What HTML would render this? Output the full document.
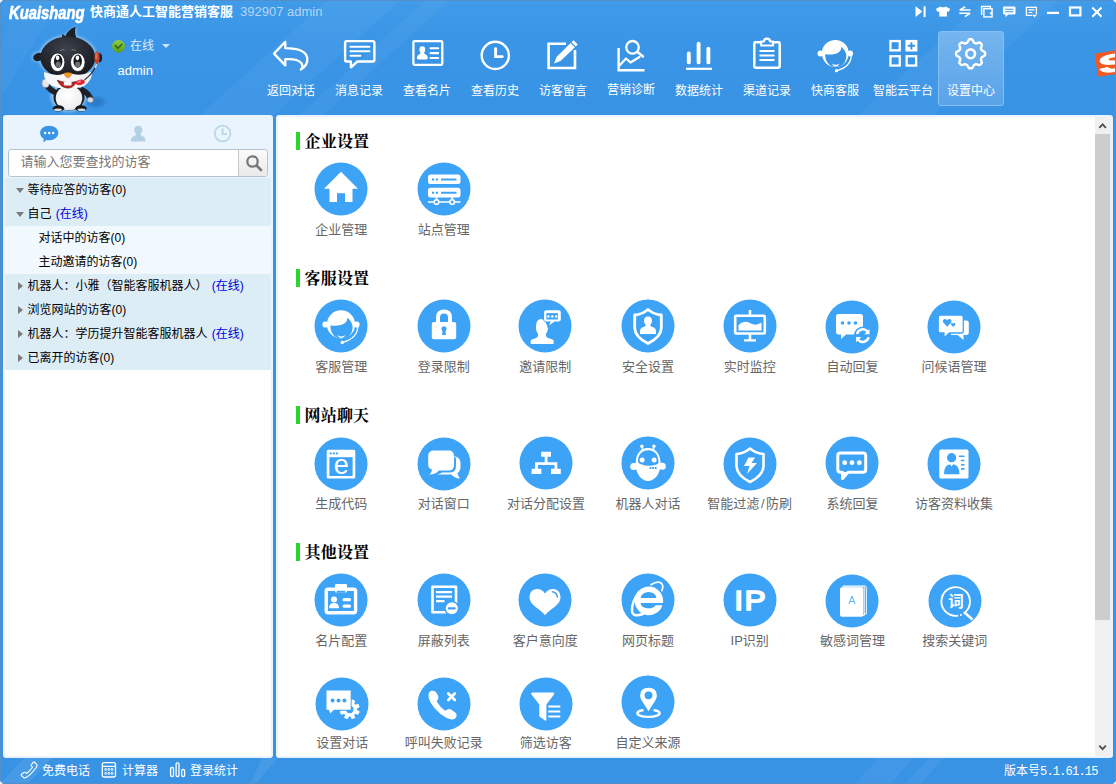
<!DOCTYPE html>
<html lang="zh-CN">
<head>
<meta charset="utf-8">
<title>快商通人工智能营销客服</title>
<style>
*{box-sizing:border-box;margin:0;padding:0}
html,body{width:1116px;height:784px;overflow:hidden}
body{position:relative;background:linear-gradient(#409be9 0,#3a95e6 40px,#3893e5 115px,#3893e5 100%);font-family:"Liberation Sans","Noto Sans CJK SC",sans-serif;font-size:12px;color:#000}
.abs{position:absolute}
#frame{position:absolute;left:0;top:0;width:1116px;height:784px;border:1px solid #5390c9;pointer-events:none;z-index:50}
.stripe{position:absolute;left:0;top:0;width:1116px;height:784px;z-index:0}
/* title */
#logo{position:absolute;left:8.500px;top:2.750px;font-family:"Liberation Sans",sans-serif;font-style:italic;font-weight:bold;font-size:18px;letter-spacing:0;color:#fff;line-height:20px;transform-origin:0 50%;transform:scaleX(0.820);white-space:nowrap;-webkit-text-stroke:0.700px #fff}
#ttl{position:absolute;left:90px;top:2px;font-weight:bold;font-size:13px;color:#fff;line-height:20px;white-space:nowrap}
#acct{position:absolute;left:240px;top:2px;font-size:13px;color:#b5d6f5;line-height:20px;white-space:nowrap}
#stat{position:absolute;left:130px;top:37px;font-size:12px;color:#d9ecfc;line-height:18px}
#uname{position:absolute;left:117.500px;top:62px;font-size:13px;color:#fff;line-height:18px}
/* toolbar */
.tb{position:absolute;top:31px;width:68px;height:74px;text-align:center;color:#fff;font-size:12px}
.tb span{position:absolute;left:0;right:0;top:50px;line-height:18px;white-space:nowrap}
.tb svg{position:absolute;left:14px;top:3px;width:40px;height:40px}
.tb.sel{background:linear-gradient(#75b5ef,#5aa3e8);border:1px solid #86c0f2;border-radius:3px;width:66px;left:938px;top:31px;height:75px}
.tbl{position:absolute;width:80px;text-align:center;color:#fff;font-size:12px;line-height:20px;white-space:nowrap}
/* left panel */
#lp{position:absolute;left:3px;top:115px;width:270px;height:643px;background:#fff;border-radius:3px;overflow:hidden;border:2px solid #eaf3fd}
#lp .tabs{position:absolute;left:0;top:0;width:266px;height:62px;background:#eaf4ff}
#srch{position:absolute;left:3px;top:31.500px;width:259.500px;height:28px;border:1px solid #b9c3cc;border-radius:3px;background:#fff}
#srch .ph{position:absolute;left:11.500px;top:3.500px;font-size:13px;color:#777;line-height:18px;white-space:nowrap}
#srch .btn{position:absolute;right:0;top:0;width:29px;height:26px;border-left:1px solid #c5c9cd;background:linear-gradient(#fbfbfb,#e9e9e9);border-radius:0 3px 3px 0}
.row{position:absolute;left:0;width:266px;height:24px;background:#ddedf6;font-size:12px;line-height:25px;color:#000;white-space:nowrap}
.row.sub{background:#f1f9fe}
.row b{font-weight:normal;color:#0000e0;margin-left:1px}
.row i{position:absolute;left:10.500px;top:10px;width:0;height:0;border-style:solid}
.row i.dn{border-width:5px 4px 0 4px;border-color:#7a7a7a transparent transparent transparent}
.row i.rt{left:12.500px;top:7.500px;border-width:4px 0 4px 5px;border-color:transparent transparent transparent #7a7a7a}
.row em{font-style:normal;position:absolute;left:22.500px;top:0}
.row.sub em{left:33.500px}
/* right panel */
#rp{position:absolute;left:276px;top:115px;width:837px;height:643px;background:#fff;border-radius:3px;overflow:hidden;border:2px solid #eaf3fd}
.sec{position:absolute;left:18px;height:18px;border-left:4px solid #2bd52b;padding-left:4.500px;font-family:"Liberation Serif","Noto Serif CJK SC",serif;font-weight:bold;font-size:16px;line-height:20px;letter-spacing:0.200px;color:#000;white-space:nowrap}
.ic{position:absolute;width:102px;height:84px;text-align:center}
.ic svg{position:absolute;left:24px;top:0;width:54px;height:54px}
.ic span{position:absolute;left:-10px;right:-10px;top:58px;font-size:13px;line-height:18px;color:#666;white-space:nowrap}
.ic span i{font-style:normal;padding:0 1.500px}
#sb{position:absolute;right:0;top:0;width:16px;height:639px;background:#f0f0f0}
#sb .th{position:absolute;left:0;top:17px;width:15px;height:486px;background:#cdcdcd}
/* status bar */
.st{position:absolute;top:762px;font-size:12px;line-height:18px;color:#fff;white-space:nowrap}
</style>
</head>
<body>
<svg class="stripe" viewBox="0 0 1116 784" preserveAspectRatio="none">
<polygon points="199,116 273,116 401,0 327,0" fill="#fff" opacity="0.045"/>
<polygon points="298,116 322,116 450,0 426,0" fill="#fff" opacity="0.040"/>
<polygon points="-10,60 7,28 24,0 60,0 -10,116" fill="#fff" opacity="0.035"/>
<polygon points="857,116 932,116 1060,0 985,0" fill="#fff" opacity="0.040"/>
<polygon points="0,784 28,784 52,758 24,758" fill="#fff" opacity="0.070"/>
<polygon points="250,784 256,784 278,758 262,758" fill="#fff" opacity="0.070"/>
<polygon points="855,784 890,784 914,758 879,758" fill="#fff" opacity="0.050"/>
<polygon points="905,784 920,784 944,758 929,758" fill="#fff" opacity="0.050"/>
</svg>

<!-- title bar -->
<div id="logo">Kuaishang</div>
<div id="ttl">快商通人工智能营销客服</div>
<div id="acct">392907 admin</div>

<!-- window controls -->
<svg class="abs" id="wc" style="left:910px;top:2px;width:200px;height:22px" viewBox="910 2 200 22" fill="none" stroke="#fff" stroke-width="1.600">
<path d="M915.500 6.300 L922.400 11.600 L915.500 17 Z" fill="#fff" stroke="none"/><path d="M924.600 6.300 V17" stroke-width="2"/>
<path d="M935.800 9 L940.500 6.400 Q943 8.300 945.600 6.400 L950.300 9 L948.500 12.100 L946.900 11.200 V16.500 H939.300 V11.200 L937.700 12.100 Z" fill="#fff" stroke="none"/>
<path d="M959.600 10 H970.600 M965.200 6.800 L959.900 10 M959.300 13.300 H970.300 M964.800 16.600 L970 13.400" stroke-width="1.600"/>
<path d="M981.600 15 V6.500 H990.400 V8.600" stroke-width="1.400"/><rect x="983.900" y="8.700" width="8.200" height="8.200" stroke-width="1.400"/><path d="M992 11.300 L989.300 13.200 L992 15.100Z" fill="#fff" stroke="none"/>
<path d="M1004.300 6.400 H1014.200 Q1015.500 6.400 1015.500 7.700 V13.200 Q1015.500 14.500 1014.200 14.500 H1008.200 L1005.500 17.200 V14.500 H1004.300 Q1003 14.500 1003 13.200 V7.700 Q1003 6.400 1004.300 6.400 Z" fill="#fff" stroke="none"/><path d="M1005.200 9.200 H1013.300 M1005.200 11.800 H1013.300" stroke="#3a94e5" stroke-width="1.100"/>
<rect x="1026.400" y="7.300" width="10" height="8" stroke-width="1.300"/><path d="M1028.400 9.900 H1034.400 M1028.400 12.500 H1032.400" stroke-width="1.100"/><path d="M1031.800 14.600 H1037.400 L1034.600 17.700Z" fill="#fff" stroke="#3a94e5" stroke-width="0.600"/>
<path d="M1047 12.900 H1059" stroke-width="2.300"/>
<rect x="1070" y="7.500" width="10.400" height="7.900" stroke-width="2.200"/>
<path d="M1092.300 7.500 L1101.500 16.700 M1101.500 7.500 L1092.300 16.700" stroke-width="2.100"/>
</svg>

<!-- mascot -->
<svg class="abs" id="mascot" style="left:28px;top:22px;width:84px;height:94px" viewBox="28 22 84 94">
<defs>
<radialGradient id="hd" cx="0.45" cy="0.3" r="0.75"><stop offset="0" stop-color="#3d424d"/><stop offset="0.6" stop-color="#23262d"/><stop offset="1" stop-color="#14161a"/></radialGradient>
<radialGradient id="bl" cx="0.45" cy="0.4" r="0.7"><stop offset="0" stop-color="#ffffff"/><stop offset="0.75" stop-color="#f0f0f2"/><stop offset="1" stop-color="#b9bcc4"/></radialGradient>
<filter id="gl" x="-20%" y="-20%" width="140%" height="140%"><feGaussianBlur stdDeviation="1.600"/></filter>
</defs>
<ellipse cx="96" cy="102" rx="9" ry="5" fill="#1e5ea6" opacity="0.45" filter="url(#gl)"/>
<g filter="url(#gl)" opacity="0.550" fill="#cfe6fb">
<ellipse cx="67.800" cy="57" rx="29" ry="22"/><ellipse cx="68.500" cy="96" rx="18" ry="16"/><ellipse cx="38" cy="57" rx="6" ry="5"/><path d="M61 38 L75.500 26 L77 38Z"/>
</g>
<!-- tuft -->
<path d="M62 38 Q62 35 62.700 33.800 Q63.500 35.500 65.500 36 Q68 29.500 75.700 26.800 Q74 32 76.500 38 Z" fill="#1d2026"/>
<!-- ear -->
<ellipse cx="38.300" cy="57" rx="5.300" ry="4" fill="#1d2026" transform="rotate(-20 38.300 57)"/>
<!-- arms -->
<path d="M56 93 Q50 90 46.500 85.500" stroke="#1d2026" stroke-width="5.500" stroke-linecap="round" fill="none"/>
<path d="M82.500 90 Q88 93 90.500 98.500" stroke="#1d2026" stroke-width="5.500" stroke-linecap="round" fill="none"/>
<ellipse cx="45.600" cy="83.300" rx="3.600" ry="4.300" fill="#e4e6ea" stroke="#8c919c" stroke-width="0.600"/>
<ellipse cx="90.300" cy="99.800" rx="3" ry="2.600" fill="#d8dade" stroke="#8c919c" stroke-width="0.500"/>
<!-- body -->
<ellipse cx="69" cy="97.500" rx="15.500" ry="13" fill="#1d2026"/>
<ellipse cx="69" cy="98" rx="13.300" ry="12.300" fill="url(#bl)"/>
<!-- feet -->
<ellipse cx="58.500" cy="108.300" rx="5.600" ry="3" fill="#15171b"/><ellipse cx="81" cy="108.300" rx="5.600" ry="3" fill="#15171b"/>
<ellipse cx="58" cy="109.800" rx="4" ry="1.300" fill="#d9dbe0"/><ellipse cx="81.500" cy="109.800" rx="4" ry="1.300" fill="#d9dbe0"/>
<!-- head -->
<ellipse cx="67.800" cy="57.500" rx="27.500" ry="21" fill="url(#hd)"/>
<path d="M44 72 Q55 76.500 63 74 Q68 72.500 73 74 Q82 76.500 91.500 71.500 Q93 80 84 86 Q68 92 52 86 Q43 80 44 72Z" fill="#f6f6f8"/>
<!-- eyes -->
<ellipse cx="57.600" cy="62.300" rx="7.300" ry="9.300" fill="#fff" stroke="#15171b" stroke-width="0.800"/><ellipse cx="77.800" cy="62.300" rx="7.300" ry="9.300" fill="#fff" stroke="#15171b" stroke-width="0.800"/>
<ellipse cx="58.200" cy="61.300" rx="4.200" ry="6.600" fill="#17191d"/><ellipse cx="77.700" cy="61.200" rx="4.200" ry="6.600" fill="#17191d"/>
<ellipse cx="58.200" cy="64.500" rx="2.600" ry="3" fill="#6b6f78"/><ellipse cx="77.700" cy="64.500" rx="2.600" ry="3" fill="#6b6f78"/>
<ellipse cx="57.600" cy="57.800" rx="1.800" ry="2.400" fill="#fff"/><ellipse cx="77.400" cy="57.800" rx="1.800" ry="2.400" fill="#fff"/>
<path d="M60 50.500 Q62.500 49 64.500 50 M71.500 50 Q74 49 76 50.500" stroke="#8a8f9a" stroke-width="0.700" fill="none"/>
<!-- nose/mouth -->
<path d="M63.700 73.300 Q67.800 71.800 72.300 73.300 Q70 77.800 67.900 78 Q65.800 77.800 63.700 73.300Z" fill="#f29a2a" stroke="#b5651d" stroke-width="0.400"/>
<path d="M57.300 80.300 Q66 84 76.500 81.600 Q73.500 88.500 67.300 88 Q60.500 87.500 57.300 80.300Z" fill="#c2201f" stroke="#5a1511" stroke-width="0.700"/>
<rect x="63.800" y="81.500" width="7.800" height="4" rx="1.200" fill="#f3f6fa"/>
<!-- headset -->
<ellipse cx="99.500" cy="57.700" rx="2.600" ry="4.500" fill="#1d2026"/>
<ellipse cx="97" cy="57.600" rx="2.600" ry="6.300" fill="#c5402c"/>
<ellipse cx="96.400" cy="56" rx="1.100" ry="3.500" fill="#e0705a"/>
<path d="M96.500 64 Q94.500 72 84.500 80" stroke="#2a2d34" stroke-width="1.100" fill="none"/>
<path d="M96.500 64 L95.300 68" stroke="#e8e8ea" stroke-width="1.300" fill="none"/>
<ellipse cx="80.300" cy="82.300" rx="4.600" ry="2.700" fill="#e2283a" transform="rotate(-12 80.300 82.300)"/>
<ellipse cx="79.300" cy="81.600" rx="2" ry="1" fill="#f47a86" transform="rotate(-12 79.300 81.600)"/>
</svg>

<!-- status -->
<svg class="abs" style="left:111px;top:39px;width:15px;height:15px" viewBox="111 39 15 15"><defs><linearGradient id="gk" x1="0" y1="0" x2="0" y2="1"><stop offset="0" stop-color="#93cf45"/><stop offset="1" stop-color="#569c1c"/></linearGradient></defs><circle cx="118.500" cy="46.300" r="6.400" fill="url(#gk)"/><path d="M115.300 45.600 L118 48.300 L121.800 44.300" stroke="#2b6a0c" stroke-width="1.500" fill="none" stroke-linecap="round" stroke-linejoin="round"/></svg>
<div id="stat">在线</div>
<div class="abs" style="left:162px;top:44px;width:0;height:0;border-style:solid;border-width:4px 4px 0 4px;border-color:#cfe5fa transparent transparent transparent"></div>
<div id="uname">admin</div>

<!-- TOOLBAR -->
<div class="tb sel"></div>
<svg class="abs" style="left:260px;top:30px;width:760px;height:50px" viewBox="260 30 760 50" fill="none" stroke="#fff" stroke-width="2.6" stroke-linejoin="round" stroke-linecap="round">
<!-- 1 reply arrow -->
<path d="M285.300 41.800 L274 53.600 L285.300 65.400 V59.200 Q297.500 58.500 301.300 63 Q303.800 66.500 300.800 69.600 Q308 65.500 307.300 58 Q305.500 48.400 285.300 48.200 Z" stroke-width="2.300"/>
<!-- 2 message -->
<g transform="translate(0.4 0.8)"><path d="M346 40.300 H372.500 Q374 40.300 374 42 V59 Q374 60.700 372.500 60.700 H357 L350.500 66.500 V60.700 H346 Q344.700 60.700 344.700 59 V42 Q344.700 40.300 346 40.300 Z" stroke-width="2.400"/>
<path d="M350 46 H369 M350 50.500 H369 M350 55 H360" stroke-width="2"/></g>
<!-- 3 card -->
<rect x="413.400" y="41.200" width="28.900" height="23.600" rx="1.200" stroke-width="2.300"/>
<path d="M430.500 48.200 H438.200 M430.500 53.100 H438.200 M430.500 58 H438.200" stroke-width="2.100"/>
<path d="M422.300 46.300 q2.900 0 2.900 3.300 q0 2.300 -1.200 3.200 q0.200 1.200 1.600 1.700 q2.200 0.800 2.200 3.400 q0 1.600 -2.500 1.600 h-6 q-2.500 0 -2.500 -1.600 q0 -2.600 2.200 -3.400 q1.400 -0.500 1.600 -1.700 q-1.200 -0.900 -1.200 -3.200 q0 -3.300 2.900 -3.300z" fill="#fff" stroke="none"/>
<!-- 4 clock -->
<circle cx="495.300" cy="55.400" r="13.600" stroke-width="2.400"/>
<path d="M495.600 48.600 V56.600 H502.300" stroke-width="2.900" stroke-linejoin="miter" stroke-linecap="round"/>
<!-- 5 edit -->
<path d="M566 43.700 H548.600 V68 H575 V50" stroke-width="2.600" stroke-linejoin="miter" stroke-linecap="butt"/>
<path d="M573.500 40.200 L577.800 44.500 L560.500 61 L554 63.500 L556.500 57 Z" fill="#fff" stroke="none"/>
<path d="M571 42.600 L575.400 47" stroke="#3a94e5" stroke-width="1.200"/>
<!-- 6 chart magnifier -->
<path d="M618.600 48 V70.200 H644.500" stroke-width="2.400" stroke-linejoin="miter" stroke-linecap="butt"/>
<path d="M619.500 65.500 L626 58.500 L630.500 62.500 L639.500 57" stroke-width="2.200"/>
<circle cx="632.500" cy="47.300" r="6.300" stroke-width="2.300"/>
<path d="M637.500 52 L643 56.500" stroke-width="2.400"/>
<!-- 7 bars -->
<path d="M688.800 53.400 V62.400 M698.600 43.800 V62.400 M708.400 48.800 V62.400" stroke-width="3.900"/>
<path d="M686 68.800 H712" stroke-width="2.200" stroke-linecap="butt"/>
<!-- 8 clipboard -->
<path d="M760 42.300 H755.500 Q754.300 42.300 754.300 43.500 V66.500 Q754.300 67.700 755.500 67.700 H778.500 Q779.700 67.700 779.700 66.500 V43.500 Q779.700 42.300 778.500 42.300 H774" stroke-width="2.500"/>
<path d="M761 45.500 V41.500 H764 Q764 38.600 767 38.600 Q770 38.600 770 41.500 H773 V45.500 Z" stroke-width="2.200"/>
<path d="M759.500 51 H774.500 M759.500 55.500 H774.500 M759.500 60 H774.500" stroke-width="2" stroke-linecap="butt"/>
<!-- 9 agent headset -->
<g transform="translate(835.300 54.900) scale(0.955)" stroke="none"><ellipse cx="-15.800" cy="-1.500" rx="2.800" ry="3.100" fill="#fff"/><ellipse cx="15.800" cy="-1.500" rx="2.800" ry="3.100" fill="#fff"/>
<circle cx="0" cy="-1.600" r="14.100" fill="#fff"/>
<path d="M-10.700 -0.600 Q-1 0.600 4 -3 Q6.500 -5 6.400 -8.200 Q11.600 -4 11.600 1.500 Q11.200 8 6.500 11 Q0.500 13.800 -5.500 11 Q-10.600 7 -10.700 -0.600 Z" fill="#3993e5"/>
<path d="M-3.900 9 Q0.400 15.500 4.700 9 Q0.400 11.800 -3.900 9 Z" fill="#fff"/>
<path d="M16.800 0.500 Q16.500 12 2 16.400" stroke="#fff" stroke-width="1.300" fill="none"/><circle cx="1.300" cy="16.500" r="1.700" fill="#fff"/></g>
<!-- 10 grid plus -->
<rect x="890.450" y="41.050" width="9.300" height="9.300" stroke-width="2.300" stroke-linejoin="miter"/>
<rect x="890.450" y="56.250" width="9.300" height="9.300" stroke-width="2.300" stroke-linejoin="miter"/>
<rect x="906.650" y="56.250" width="9.500" height="9.300" stroke-width="2.300" stroke-linejoin="miter"/>
<rect x="905.400" y="39.900" width="12" height="11.600" fill="#fff" stroke="none"/>
<path d="M911.400 42.200 V49.400 M907.800 45.800 H915" stroke="#3993e5" stroke-width="1.900" stroke-linecap="butt"/>
<!-- 11 gear -->
<path d="M970.6 39.3 L971.4 39.3 L972.1 39.4 L972.7 40.2 L973.3 41.3 L973.7 42.2 L974.2 42.8 L974.8 43.0 L975.3 43.2 L975.9 43.5 L976.6 43.4 L977.6 43.0 L978.7 42.7 L979.7 42.5 L980.3 43.0 L980.9 43.5 L981.4 44.1 L981.9 44.7 L981.7 45.7 L981.4 46.8 L981.0 47.8 L980.9 48.5 L981.2 49.1 L981.4 49.6 L981.6 50.2 L982.2 50.7 L983.1 51.1 L984.2 51.7 L985.0 52.3 L985.1 53.0 L985.1 53.8 L985.1 54.6 L985.0 55.3 L984.2 55.9 L983.1 56.5 L982.2 56.9 L981.6 57.4 L981.4 58.0 L981.2 58.5 L980.9 59.1 L981.0 59.8 L981.4 60.8 L981.7 61.9 L981.9 62.9 L981.4 63.5 L980.9 64.1 L980.3 64.6 L979.7 65.1 L978.7 64.9 L977.6 64.6 L976.6 64.2 L975.9 64.1 L975.3 64.4 L974.8 64.6 L974.2 64.8 L973.7 65.4 L973.3 66.3 L972.7 67.4 L972.1 68.2 L971.4 68.3 L970.6 68.3 L969.8 68.3 L969.1 68.2 L968.5 67.4 L967.9 66.3 L967.5 65.4 L967.0 64.8 L966.4 64.6 L965.9 64.4 L965.3 64.1 L964.6 64.2 L963.6 64.6 L962.5 64.9 L961.5 65.1 L960.9 64.6 L960.3 64.1 L959.8 63.5 L959.3 62.9 L959.5 61.9 L959.8 60.8 L960.2 59.8 L960.3 59.1 L960.0 58.5 L959.8 58.0 L959.6 57.4 L959.0 56.9 L958.1 56.5 L957.0 55.9 L956.2 55.3 L956.1 54.6 L956.1 53.8 L956.1 53.0 L956.2 52.3 L957.0 51.7 L958.1 51.1 L959.0 50.7 L959.6 50.2 L959.8 49.6 L960.0 49.1 L960.3 48.5 L960.2 47.8 L959.8 46.8 L959.5 45.7 L959.3 44.7 L959.8 44.1 L960.3 43.5 L960.9 43.0 L961.5 42.5 L962.5 42.7 L963.6 43.0 L964.6 43.4 L965.3 43.5 L965.9 43.2 L966.4 43.0 L967.0 42.8 L967.5 42.2 L967.9 41.3 L968.5 40.2 L969.1 39.4 L969.8 39.3 Z" stroke-width="2.400"/>
<circle cx="970.600" cy="53.800" r="4.400" stroke-width="2.600"/>
</svg>
<div class="tbl" style="left:251px;top:81px">返回对话</div>
<div class="tbl" style="left:319px;top:81px">消息记录</div>
<div class="tbl" style="left:387px;top:81px">查看名片</div>
<div class="tbl" style="left:455px;top:81px">查看历史</div>
<div class="tbl" style="left:523px;top:81px">访客留言</div>
<div class="tbl" style="left:591px;top:80px">营销诊断</div>
<div class="tbl" style="left:659px;top:81px">数据统计</div>
<div class="tbl" style="left:727px;top:81px">渠道记录</div>
<div class="tbl" style="left:795px;top:81px">快商客服</div>
<div class="tbl" style="left:863px;top:81px">智能云平台</div>
<div class="tbl" style="left:931px;top:81px">设置中心</div>


<!-- sogou S -->
<svg class="abs" style="left:1090px;top:44px;width:26px;height:40px" viewBox="1090 44 26 40"><g transform="rotate(-9 1106 64)"><rect x="1096.300" y="52" width="30" height="23.500" rx="1.800" fill="#f2591f"/><text transform="translate(1098.200 72.600) scale(2.050 1)" font-family="Liberation Sans,sans-serif" font-weight="bold" font-size="24.500" fill="#fff" stroke="#fff" stroke-width="0.900">S</text></g></svg>

<!-- LEFT PANEL -->
<div id="lp">
<div class="tabs"><svg style="position:absolute;left:0;top:0;width:266px;height:32px" viewBox="5 117 266 32">
<path d="M49.200 125.800 C54.500 125.800 58.300 129 58.300 133 C58.300 137 54.500 140.200 49.200 140.200 C48.200 140.200 47.300 140.100 46.400 139.900 L43.300 142.700 L43.800 138.800 C41.500 137.500 40.100 135.400 40.100 133 C40.100 129 43.900 125.800 49.200 125.800 Z" fill="#3a95e7"/>
<circle cx="45.200" cy="133" r="1.250" fill="#fff"/><circle cx="49.200" cy="133" r="1.250" fill="#fff"/><circle cx="53.200" cy="133" r="1.250" fill="#fff"/>
<path d="M138.300 125.800 c2.600 0 4 1.900 4 4.300 c0 1.900 -0.800 3.400 -2 4.100 c0.400 1.200 1.600 1.700 3 2.300 c1.700 0.700 2.300 2.300 2.300 5.100 h-14.600 c0 -2.800 0.600 -4.400 2.300 -5.100 c1.400 -0.600 2.600 -1.100 3 -2.300 c-1.200 -0.700 -2 -2.200 -2 -4.100 c0 -2.400 1.400 -4.300 4 -4.300z" fill="#b4d0e4"/>
<circle cx="222.600" cy="133.500" r="7.800" fill="none" stroke="#bcd6e6" stroke-width="1.800"/><path d="M222.600 128.500 V134.200 H227" fill="none" stroke="#bcd6e6" stroke-width="1.800"/>
</svg></div>
<div id="srch"><div class="ph">请输入您要查找的访客</div><div class="btn"><svg style="position:absolute;left:6px;top:4px;width:18px;height:18px" viewBox="0 0 18 18" fill="none" stroke="#787878" stroke-width="2.300"><circle cx="7.500" cy="7.500" r="5.200"/><path d="M11.500 11.500 L16 16" stroke-width="2.800" stroke-linecap="round"/></svg></div></div>
<div class="row" style="top:61px"><i class="dn"></i><em>等待应答的访客(0)</em></div>
<div class="row" style="top:85px"><i class="dn"></i><em>自己 <b>(在线)</b></em></div>
<div class="row sub" style="top:109px"><em>对话中的访客(0)</em></div>
<div class="row sub" style="top:133px"><em>主动邀请的访客(0)</em></div>
<div class="row" style="top:157px"><i class="rt"></i><em>机器人：小雅（智能客服机器人） <b>(在线)</b></em></div>
<div class="row" style="top:181px"><i class="rt"></i><em>浏览网站的访客(0)</em></div>
<div class="row" style="top:205px"><i class="rt"></i><em>机器人：学历提升智能客服机器人 <b>(在线)</b></em></div>
<div class="row" style="top:229px"><i class="rt"></i><em>已离开的访客(0)</em></div>
</div>

<!-- RIGHT PANEL -->
<div id="rp">
<div id="sb"><div class="th"></div>
<svg style="position:absolute;left:0;top:0;width:17px;height:17px" viewBox="0 0 17 17"><path d="M4.300 10.800 L7.600 7.400 L10.900 10.800" stroke="#505050" stroke-width="1.900" fill="none"/></svg>
<svg style="position:absolute;left:0;bottom:0;width:17px;height:17px" viewBox="0 0 17 17"><path d="M4.300 6.700 L7.600 10.100 L10.900 6.700" stroke="#505050" stroke-width="1.900" fill="none"/></svg>
</div>
<div id="grid">
<div class="sec" style="top:15px">企业设置</div>
<div class="ic" style="left:12.3px;top:45px"><svg viewBox="-27 -27 54 54"><circle r="26.500" fill="#3da3f7"/><path d="M0 -17.200 L17 -0.300 H11.500 V13 H4 V4.300 H-4 V13 H-11.500 V-0.300 H-17 Z" fill="#fff"/></svg><span style="top:58.8px">企业管理</span></div>
<div class="ic" style="left:114.8px;top:45px"><svg viewBox="-27 -27 54 54"><circle r="26.500" fill="#3da3f7"/><rect x="-16" y="-14.500" width="32.500" height="9.600" rx="2.500" fill="#fff"/><rect x="-16" y="-1.200" width="32.500" height="9.600" rx="2.500" fill="#fff"/><path d="M-12 -10.600 h2.200 v2 h-2.200z M-8.200 -10.600 h2.200 v2 h-2.200z M-3 -10.600 h15.500 v2 h-15.500z M-12 2.700 h2.200 v2 h-2.200z M-8.200 2.700 h2.200 v2 h-2.200z M-3 2.700 h15.500 v2 h-15.500z" fill="#3da3f7"/><path d="M-16 13 H16.500 M-7.500 8 V11 M8.200 8 V11" stroke="#fff" stroke-width="1.600" fill="none"/><circle cx="-7.500" cy="13" r="2.300" fill="#3da3f7" stroke="#fff" stroke-width="1.600"/><circle cx="8.200" cy="13" r="2.300" fill="#3da3f7" stroke="#fff" stroke-width="1.600"/></svg><span style="top:58.8px">站点管理</span></div>
<div class="sec" style="top:152px">客服设置</div>
<div class="ic" style="left:12.3px;top:182px"><svg viewBox="-27 -27 54 54"><circle r="26.500" fill="#3da3f7"/><ellipse cx="-15.800" cy="-1.500" rx="2.800" ry="3.100" fill="#fff"/><ellipse cx="15.800" cy="-1.500" rx="2.800" ry="3.100" fill="#fff"/><circle cx="0" cy="-1.600" r="14.100" fill="#fff"/><path d="M-10.700 -0.600 Q-1 0.600 4 -3 Q6.500 -5 6.400 -8.200 Q11.600 -4 11.600 1.500 Q11.200 8 6.500 11 Q0.500 13.800 -5.500 11 Q-10.600 7 -10.700 -0.600 Z" fill="#3da3f7"/><path d="M-3.900 9 Q0.400 15.500 4.700 9 Q0.400 11.800 -3.900 9 Z" fill="#fff"/><path d="M16.800 0.500 Q16.500 12 2 16.400" stroke="#fff" stroke-width="1.300" fill="none"/><circle cx="1.300" cy="16.500" r="1.700" fill="#fff"/></svg><span style="top:58.8px">客服管理</span></div>
<div class="ic" style="left:114.8px;top:182px"><svg viewBox="-27 -27 54 54"><circle r="26.500" fill="#3da3f7"/><path d="M-6 -3 V-8.500 Q-6 -14.500 0 -14.500 Q6 -14.500 6 -8.500 V-3" stroke="#fff" stroke-width="4" fill="none"/><rect x="-12.200" y="-4" width="24.400" height="17.300" rx="2" fill="#fff"/><circle cx="0" cy="2.800" r="2.500" fill="#3da3f7"/><path d="M-1.300 3.500 h2.600 l0.700 5.500 h-4z" fill="#3da3f7"/></svg><span style="top:58.8px">登录限制</span></div>
<div class="ic" style="left:216.3px;top:182px"><svg viewBox="-27 -27 54 54"><circle r="26.500" fill="#3da3f7"/><path d="M-14.300 18 V14.500 Q-14.300 13.800 -13 13.400 L-8.500 11.800 Q-7 11 -7 9 V7.500 Q-9.500 5 -9 0.500 Q-9 -6.500 -4.500 -7 Q-1.500 -7.200 0 -4.500 L2.200 -0.300 Q2 0.500 2.600 1.500 L3.200 2.800 Q3.200 3.500 2.500 3.800 Q2.800 6.500 1 7.500 V9 Q1 11 2.500 11.800 L7.300 13.400 Q8.600 13.800 8.600 14.500 V18 Z" fill="#fff"/><path d="M1.100 -15.700 H13.800 Q15.800 -15.700 15.800 -13.700 V-6.600 Q15.800 -4.600 13.800 -4.600 H9.500 L4 -0.400 L5.800 -4.600 H1.100 Q-0.900 -4.600 -0.900 -6.600 V-13.700 Q-0.900 -15.700 1.100 -15.700 Z" fill="#fff" stroke="#3da3f7" stroke-width="1.300" paint-order="stroke"/><rect x="1.400" y="-12.900" width="11.500" height="6.400" fill="#3da3f7"/><circle cx="3.500" cy="-9.600" r="1.250" fill="#fff"/><circle cx="7.300" cy="-9.600" r="1.250" fill="#fff"/><circle cx="11.100" cy="-9.600" r="1.250" fill="#fff"/></svg><span style="top:58.8px">邀请限制</span></div>
<div class="ic" style="left:319px;top:182px"><svg viewBox="-27 -27 54 54"><circle r="26.500" fill="#3da3f7"/><path d="M0 -16.500 Q6 -11.500 13.300 -11 V2 Q13 11 0 17.500 Q-13 11 -13.300 2 V-11 Q-6 -11.500 0 -16.500 Z" fill="none" stroke="#fff" stroke-width="2.800" stroke-linejoin="round"/><path d="M0 -9.500 q4 0 4 4.300 q0 3 -1.700 4.200 q0.300 1.700 2.700 2.300 q3 0.800 3 4.200 v2.500 h-16 v-2.500 q0 -3.400 3 -4.200 q2.400 -0.600 2.700 -2.300 q-1.700 -1.200 -1.700 -4.200 q0 -4.300 4 -4.300z" fill="#fff"/></svg><span style="top:58.8px">安全设置</span></div>
<div class="ic" style="left:420.7px;top:182px"><svg viewBox="-27 -27 54 54"><circle r="26.500" fill="#3da3f7"/><path d="M-1.300 -16 h2.600 v6 h-2.600z M-1.300 8 h2.600 v6 h-2.600z M-6 13.200 h12 v2.400 h-12z" fill="#fff"/><rect x="-14.800" y="-10.300" width="29.600" height="17.800" rx="1" fill="none" stroke="#fff" stroke-width="2.600"/><path d="M-11.500 -1 Q-6 -6.500 0 -3 Q6 0.500 11.500 -3.500 V4.500 H-11.500 Z" fill="#fff"/></svg><span style="top:58.8px">实时监控</span></div>
<div class="ic" style="left:523.4px;top:183.3px"><svg viewBox="-27 -27 54 54"><circle r="26.500" fill="#3da3f7"/><path d="M-13.500 -13 H8.500 Q11 -13 11 -10.500 V5 Q11 7.500 8.500 7.500 H-6 L-11 12 V7.500 H-13.500 Q-16 7.500 -16 5 V-10.500 Q-16 -13 -13.500 -13 Z" fill="#fff"/><circle cx="-9.500" cy="-4" r="1.800" fill="#3da3f7"/><circle cx="-3" cy="-4" r="1.800" fill="#3da3f7"/><circle cx="3.500" cy="-4" r="1.800" fill="#3da3f7"/><circle cx="10.800" cy="8.600" r="9" fill="#3da3f7"/><path d="M5 7 A6 6 0 0 1 15.500 4.500 M16.600 10.200 A6 6 0 0 1 6.100 12.700" fill="none" stroke="#fff" stroke-width="2.400"/><path d="M17.500 2 V7.200 H12.300 Z M4.100 15.200 V10 H9.300 Z" fill="#fff"/></svg><span style="top:57.5px">自动回复</span></div>
<div class="ic" style="left:625px;top:183.3px"><svg viewBox="-27 -27 54 54"><circle r="26.500" fill="#3da3f7"/><path d="M4 -6.500 H12.500 Q14.800 -6.500 14.800 -4.200 V5.800 Q14.800 8 12.500 8 H9.500 V13 L3.500 8 H-3 V-6.500Z" fill="#fff"/><path d="M-13.500 -12 H7 Q9.300 -12 9.300 -9.700 V3.700 Q9.300 6 7 6 H-4.500 L-10 11 V6 H-13.500 Q-15.800 6 -15.800 3.700 V-9.700 Q-15.800 -12 -13.500 -12 Z" fill="#fff" stroke="#3da3f7" stroke-width="1.300"/><path d="M-6.800 -0.300 L-10.600 -4.200 Q-12 -6.200 -10.300 -7.600 Q-8.500 -8.800 -6.800 -6.700 Q-5.100 -8.800 -3.300 -7.600 Q-1.600 -6.200 -3 -4.200 Z" fill="#3da3f7"/><path d="M-0.800 0 L-2.700 -2 Q-3.500 -3.100 -2.600 -3.900 Q-1.600 -4.500 -0.800 -3.400 Q0 -4.500 1 -3.900 Q1.900 -3.100 1.100 -2 Z" fill="#3da3f7"/></svg><span style="top:57.5px">问候语管理</span></div>
<div class="sec" style="top:289px">网站聊天</div>
<div class="ic" style="left:12.3px;top:319.6px"><svg viewBox="-27 -27 54 54"><circle r="26.500" fill="#3da3f7"/><rect x="-14.300" y="-14.300" width="28.600" height="28.800" rx="1.500" fill="#fff"/><rect x="-11.600" y="-6.800" width="23.200" height="18.800" fill="#3da3f7"/><circle cx="-10.300" cy="-10.600" r="1.100" fill="#3da3f7"/><circle cx="-7.200" cy="-10.600" r="1.100" fill="#3da3f7"/><circle cx="-4.100" cy="-10.600" r="1.100" fill="#3da3f7"/><text x="0.200" y="9.800" font-family="Liberation Sans,sans-serif" font-size="27" fill="#fff" text-anchor="middle">e</text></svg><span style="top:58.6px">生成代码</span></div>
<div class="ic" style="left:114.8px;top:320px"><svg viewBox="-27 -27 54 54"><circle r="26.500" fill="#3da3f7"/><path d="M7 -8.500 Q16.500 -8 16.500 -1 V3 Q16.500 7 13.500 9 Q14 12 16 14.500 Q10.500 14.500 7.500 10.500 H-7 Q-3 9.500 -2 8.500 H6 Q12 8.500 12 2 V-5 Q12 -8 7 -8.500Z" fill="#fff"/><path d="M-10 -13.500 H4.500 Q10 -13.500 10 -8 V1 Q10 6.500 4.500 6.500 H-5 Q-8.500 10.500 -14.500 10.500 Q-12 8 -12 5.500 Q-15.800 4 -15.800 1 V-8 Q-15.800 -13.500 -10 -13.500 Z" fill="#fff"/></svg><span style="top:58.2px">对话窗口</span></div>
<div class="ic" style="left:217px;top:319px"><svg viewBox="-27 -27 54 54"><circle r="26.500" fill="#3da3f7"/><path d="M-4.800 -11.300 h9.800 v5 h-9.800z M-14.400 5.800 h9.800 v5.200 h-9.800z M5 5.800 h9.800 v5.200 h-9.800z" fill="#fff"/><path d="M0.100 -7 V0.600 M-9.500 7 V0.600 H9.900 V7" fill="none" stroke="#fff" stroke-width="2.800" stroke-linejoin="miter"/></svg><span style="top:59.2px">对话分配设置</span></div>
<div class="ic" style="left:319px;top:319px"><svg viewBox="-27 -27 54 54"><circle r="26.500" fill="#3da3f7"/><path d="M-5 -12.500 L-6 -16.500 M5 -12.500 L6 -16.500" stroke="#fff" stroke-width="1.300"/><circle cx="-6.100" cy="-16.800" r="1.700" fill="#fff"/><circle cx="5.900" cy="-16.800" r="1.700" fill="#fff"/><circle cx="-14.300" cy="3.400" r="3.500" fill="#fff"/><circle cx="14.300" cy="3.200" r="3.500" fill="#fff"/><path d="M0 -14.900 C9 -14.900 12.600 -7 12.600 1 C12.600 10 7 18 0 18 C-7 18 -12.400 10 -12.400 1 C-12.400 -7 -9 -14.900 0 -14.900Z" fill="#fff"/><path d="M0.300 -12.700 C7 -12.700 10.500 -7 10.600 -1 Q10.500 1 8.500 1.500 Q4 3 1 2.800 Q-3 2.800 -7 1.300 Q-10 0.500 -10 -2 C-10 -8 -6 -12.700 0.300 -12.700 Z" fill="#3da3f7"/><circle cx="-5.900" cy="-3.100" r="2.500" fill="#fff"/><circle cx="6.100" cy="-3.100" r="2.500" fill="#fff"/><path d="M1.600 4 h1.800 v1.900 h-1.800z M4.200 4 h1.800 v1.900 h-1.800z M6.800 4 h1.800 v1.900 h-1.800z" fill="#3da3f7"/></svg><span style="top:59.2px">机器人对话</span></div>
<div class="ic" style="left:420.7px;top:319.6px"><svg viewBox="-27 -27 54 54"><circle r="26.500" fill="#3da3f7"/><path d="M0 -15.500 Q6 -10.500 13.500 -10 V2.500 Q13 11.500 0 18 Q-13 11.500 -13.500 2.500 V-10 Q-6 -10.500 0 -15.500 Z" fill="none" stroke="#fff" stroke-width="2.600" stroke-linejoin="round"/><path d="M-1.500 -6.500 H5 L1.500 -1 H7 L-3 10 L-0.500 2 H-6 Z" fill="#fff"/></svg><span style="top:58.6px">智能过滤<i>/</i>防刷</span></div>
<div class="ic" style="left:523.4px;top:319px"><svg viewBox="-27 -27 54 54"><circle r="26.500" fill="#3da3f7"/><path d="M-11.500 -10 H11 Q13.700 -10 13.700 -7.300 V6.500 Q13.700 9.200 11 9.200 H-4 L-9.500 15.500 V9.200 H-11.500 Q-14.200 9.200 -14.200 6.500 V-7.300 Q-14.200 -10 -11.500 -10 Z" fill="none" stroke="#fff" stroke-width="3" stroke-linejoin="round"/><path d="M-9.500 9 L-9.500 15.500 L-4 9Z" fill="#fff"/><circle cx="-7.300" cy="-0.300" r="2.400" fill="#fff"/><circle cx="0" cy="-0.300" r="2.400" fill="#fff"/><circle cx="7.300" cy="-0.300" r="2.400" fill="#fff"/></svg><span style="top:59.2px">系统回复</span></div>
<div class="ic" style="left:625px;top:320.3px"><svg viewBox="-27 -27 54 54"><circle r="26.500" fill="#3da3f7"/><rect x="-14.700" y="-14.600" width="29.200" height="29" rx="1.500" fill="#fff"/><circle cx="-2.400" cy="-6.300" r="4.600" fill="#3da3f7"/><path d="M-10 10.300 Q-10 0 -2.400 0 Q5.500 0 5.500 10.300 Z" fill="#3da3f7"/><path d="M-4.500 -0.500 L-2.400 2.500 L-0.300 -0.500Z" fill="#fff"/><path d="M5 -8.500 h5.500 v1.600 h-5.500z M7 -4.300 h3.500 v1.600 h-3.500z M7 -0.100 h3.500 v1.600 h-3.500z M7 4.100 h3.500 v1.600 h-3.500z" fill="#3da3f7"/></svg><span style="top:57.9px">访客资料收集</span></div>
<div class="sec" style="top:426px">其他设置</div>
<div class="ic" style="left:12.3px;top:456px"><svg viewBox="-27 -27 54 54"><circle r="26.500" fill="#3da3f7"/><rect x="-14.800" y="-10.800" width="29.400" height="23.600" rx="2" fill="none" stroke="#fff" stroke-width="3.400"/><rect x="-6" y="-16" width="12" height="8.500" rx="1.200" fill="#fff"/><rect x="-4.200" y="-9.200" width="8.400" height="1.800" fill="#3da3f7"/><circle cx="-7" cy="-0.500" r="3" fill="#fff"/><path d="M-12 8.300 Q-12 3 -7 3 Q-2 3 -2 8.300Z" fill="#fff"/><rect x="1.500" y="-2" width="8.500" height="3.300" rx="1.600" fill="#fff"/><rect x="1.500" y="4.500" width="8.500" height="3.300" rx="1.600" fill="#fff"/></svg><span style="top:59.2px">名片配置</span></div>
<div class="ic" style="left:114.8px;top:456px"><svg viewBox="-27 -27 54 54"><circle r="26.500" fill="#3da3f7"/><path d="M4 12.300 H-11.500 V-13.200 H12 V3" fill="none" stroke="#fff" stroke-width="2.600" stroke-linejoin="round"/><path d="M-8 -9 h16 v2.200 h-16z M-8 -4.500 h16 v2.200 h-16z M-8 0 h8.500 v2.200 h-8.500z" fill="#fff"/><circle cx="7.800" cy="8.300" r="7.600" fill="#3da3f7"/><circle cx="7.800" cy="8.300" r="6" fill="#fff"/><rect x="3.800" y="7.200" width="8" height="2.300" rx="1" fill="#3da3f7"/></svg><span style="top:59.2px">屏蔽列表</span></div>
<div class="ic" style="left:216.3px;top:456px"><svg viewBox="-27 -27 54 54"><circle r="26.500" fill="#3da3f7"/><path d="M0 15.200 Q-3 11.500 -9.500 7 Q-16 2 -15.500 -3.500 Q-15 -10.500 -8.500 -11 Q-3 -11.300 0 -6.500 Q3 -11.300 8.500 -11 Q15 -10.500 15.500 -3.500 Q16 2 9.500 7 Q3 11.500 0 15.200 Z" fill="#fff"/><path d="M7.500 -8.200 Q11.800 -7.500 12.300 -3" fill="none" stroke="#3da3f7" stroke-width="1.500" stroke-linecap="round"/></svg><span style="top:59.2px">客户意向度</span></div>
<div class="ic" style="left:319px;top:456px"><svg viewBox="-27 -27 54 54"><circle r="26.500" fill="#3da3f7"/><path d="M14.500 5.200 A14.200 14.300 0 1 1 15 3 H-7.300 A7.800 5.300 0 0 0 7.600 5.200 Z M-7.300 -2 A7.850 6 0 0 1 8.400 -2 Z" fill-rule="evenodd" fill="#fff"/><path d="M3 -15.200 Q9 -19 13 -17.200 Q16.200 -14.500 13.800 -9.300" fill="none" stroke="#fff" stroke-width="1.700" stroke-linecap="round"/><path d="M-9 -8 Q-16.500 2 -16 11 Q-15.500 17.500 -5 14" fill="none" stroke="#fff" stroke-width="2.500" stroke-linecap="round"/></svg><span style="top:59.2px">网页标题</span></div>
<div class="ic" style="left:420.7px;top:456px"><svg viewBox="-27 -27 54 54"><circle r="26.500" fill="#3da3f7"/><text transform="scale(1.115 1)" x="0.600" y="10.300" font-family="Liberation Sans,sans-serif" font-size="28.500" letter-spacing="1.200" fill="#fff" stroke="#fff" stroke-width="1.700" stroke-linejoin="round" text-anchor="middle">IP</text></svg><span style="top:59.2px">IP识别</span></div>
<div class="ic" style="left:523.4px;top:457.3px"><svg viewBox="-27 -27 54 54"><circle r="26.500" fill="#3da3f7"/><path d="M-9 -15 H13 Q14.300 -15 14.300 -13.500 V13 H12" fill="none" stroke="#fff" stroke-width="1"/><path d="M-10 -14.200 H12.300 V14.500 H11" fill="none" stroke="#fff" stroke-width="0.900"/><rect x="-12" y="-13.700" width="23.400" height="29.400" rx="2" fill="#fff"/><text x="0" y="3.200" font-family="Liberation Sans,sans-serif" font-size="10.500" fill="#3da3f7" text-anchor="middle" opacity="0.850">A</text></svg><span style="top:57.9px">敏感词管理</span></div>
<div class="ic" style="left:625.7px;top:457.3px"><svg viewBox="-27 -27 54 54"><circle r="26.500" fill="#3da3f7"/><path d="M3.200 14.600 A14.300 14.300 0 1 1 8.500 12.500" fill="none" stroke="#fff" stroke-width="1.900"/><circle cx="5.800" cy="14" r="1" fill="#fff"/><path d="M9.500 11.500 L17.500 18.500" stroke="#fff" stroke-width="2.400"/><text x="1" y="5.600" font-family="Liberation Sans,Noto Sans CJK SC,sans-serif" font-weight="bold" font-size="15.500" fill="#fff" text-anchor="middle">词</text></svg><span style="top:57.9px">搜索关键词</span></div>
<div class="ic" style="left:13.3px;top:559.6px"><svg viewBox="-27 -27 54 54"><circle r="26.500" fill="#3da3f7"/><path d="M17.0 9.2 L16.8 9.6 L16.6 10.1 L16.3 10.6 L15.6 10.8 L13.8 9.9 L13.2 10.0 L12.9 10.3 L12.7 10.5 L12.4 10.8 L12.3 11.4 L13.2 13.2 L13.0 13.9 L12.5 14.2 L12.0 14.4 L11.6 14.6 L11.1 14.8 L10.6 15.0 L10.1 15.1 L9.5 14.8 L8.7 12.9 L8.3 12.5 L7.9 12.5 L7.5 12.5 L7.1 12.5 L6.7 12.9 L5.9 14.8 L5.3 15.1 L4.8 15.0 L4.3 14.8 L3.8 14.6 L3.4 14.4 L2.9 14.2 L2.4 13.9 L2.2 13.2 L3.1 11.4 L3.0 10.8 L2.7 10.5 L2.5 10.3 L2.2 10.0 L1.6 9.9 L-0.2 10.8 L-0.9 10.6 L-1.2 10.1 L-1.4 9.6 L-1.6 9.2 L-1.8 8.7 L-2.0 8.2 L-2.1 7.7 L-1.8 7.1 L0.1 6.3 L0.5 5.9 L0.5 5.5 L0.5 5.1 L0.5 4.7 L0.1 4.3 L-1.8 3.5 L-2.1 2.9 L-2.0 2.4 L-1.8 1.9 L-1.6 1.4 L-1.4 1.0 L-1.2 0.5 L-0.9 0.0 L-0.2 -0.2 L1.6 0.7 L2.2 0.6 L2.5 0.3 L2.7 0.1 L3.0 -0.2 L3.1 -0.8 L2.2 -2.6 L2.4 -3.3 L2.9 -3.6 L3.4 -3.8 L3.8 -4.0 L4.3 -4.2 L4.8 -4.4 L5.3 -4.5 L5.9 -4.2 L6.7 -2.3 L7.1 -1.9 L7.5 -1.9 L7.9 -1.9 L8.3 -1.9 L8.7 -2.3 L9.5 -4.2 L10.1 -4.5 L10.6 -4.4 L11.1 -4.2 L11.6 -4.0 L12.0 -3.8 L12.5 -3.6 L13.0 -3.3 L13.2 -2.6 L12.3 -0.8 L12.4 -0.2 L12.7 0.1 L12.9 0.3 L13.2 0.6 L13.8 0.7 L15.6 -0.2 L16.3 0.0 L16.6 0.5 L16.8 1.0 L17.0 1.4 L17.2 1.9 L17.4 2.4 L17.5 2.9 L17.2 3.5 L15.3 4.3 L14.9 4.7 L14.9 5.1 L14.9 5.5 L14.9 5.9 L15.3 6.3 L17.2 7.1 L17.5 7.7 L17.4 8.2 L17.2 8.7 Z" fill="#fff"/><circle cx="7.800" cy="5.500" r="3.700" fill="#3da3f7"/><path d="M-15.500 -13.600 H8.700 V5.800 H-8.200 L-11.700 9.600 L-13.200 5.800 H-15.500 Z" fill="#fff" stroke="#3da3f7" stroke-width="1.800" paint-order="stroke"/><circle cx="-9.400" cy="-3.500" r="2" fill="#3da3f7"/><circle cx="-3.500" cy="-3.500" r="2" fill="#3da3f7"/><circle cx="2.400" cy="-3.500" r="2" fill="#3da3f7"/></svg><span style="top:57.3px">设置对话</span></div>
<div class="ic" style="left:114.8px;top:559.6px"><svg viewBox="-27 -27 54 54"><circle r="26.500" fill="#3da3f7"/><path d="M-11.900 -13.300 Q-8 -13.500 -6.500 -9.500 L-5.600 -7 Q-5.300 -5.500 -6.500 -4 L-7.300 -2.600 Q-4 3 1 6.800 L3.500 5.500 Q5.500 4.500 7.500 5.800 L11.500 8.800 Q13.200 10.300 12.500 12.500 Q11 15.800 7.500 15.500 Q2 14.500 -3.500 10 Q-10 4.500 -13.500 -1.500 Q-16 -6 -15.500 -9.500 Q-15 -13 -11.900 -13.300 Z" fill="#fff"/><path d="M4.300 -10.500 L10.800 -4 M10.800 -10.500 L4.300 -4" stroke="#fff" stroke-width="2.700" stroke-linecap="round"/></svg><span style="top:57.3px">呼叫失败记录</span></div>
<div class="ic" style="left:216.8px;top:559.6px"><svg viewBox="-27 -27 54 54"><circle r="26.500" fill="#3da3f7"/><path d="M-13.300 -11.500 H7 Q9 -11.500 8 -9.500 L0.400 0.500 V16 Q0.300 17 -0.800 16.400 L-6.200 12.800 Q-6.700 12.400 -6.700 11.800 V0.500 L-14.500 -9.500 Q-15.500 -11.500 -13.300 -11.500 Z" fill="#fff"/><path d="M2.300 1.400 h12 v2.100 h-12z M2.300 6.400 h12 v2.100 h-12z M2.300 11.400 h12 v2.100 h-12z" fill="#fff"/></svg><span style="top:57.3px">筛选访客</span></div>
<div class="ic" style="left:319px;top:558.4px"><svg viewBox="-27 -27 54 54"><circle r="26.500" fill="#3da3f7"/><path d="M-5.500 8.260 A11.200 3.600 0 1 0 6.500 8.260" fill="none" stroke="#fff" stroke-width="2.400" stroke-linecap="round"/><path d="M0.500 9.200 L-6.300 -1.500 Q-7.900 -4 -7.900 -6.300 Q-7.900 -14.300 0.500 -14.300 Q8.900 -14.300 8.900 -6.300 Q8.900 -4 7.300 -1.500 Z" fill="#fff"/><circle cx="0.500" cy="-6.700" r="3.900" fill="#3da3f7"/></svg><span style="top:58.5px">自定义来源</span></div>
</div><!--/grid-->
</div>

<svg class="abs" style="left:18px;top:760px;width:172px;height:20px" viewBox="18 760 172 20" fill="none" stroke="#fff" stroke-width="1.300" stroke-linejoin="round" stroke-linecap="round">
<path d="M34.300 762 L37 764.800 Q37.300 766 36.200 767.500 Q31 774.500 26.500 777.300 Q24.500 778.300 23.500 777.500 L21.300 775.300 Q21 774.500 21.800 774 L24.300 772.300 Q25 772 25.700 772.600 L26.600 773.500 Q30 771 32.600 767.300 L31.400 766 Q31 765.300 31.600 764.500 L33.300 762.200 Q33.800 761.800 34.300 762 Z" stroke-width="1.100"/>
<rect x="102.300" y="762.600" width="13.200" height="14.400" rx="2"/><path d="M102.500 766.300 H115.300" stroke-width="1.200"/>
<g stroke-width="0.900"><rect x="104.800" y="768.600" width="1.800" height="1.800" rx="0.500"/><rect x="108" y="768.600" width="1.800" height="1.800" rx="0.500"/><rect x="111.200" y="768.600" width="1.800" height="1.800" rx="0.500"/><rect x="104.800" y="772.500" width="1.800" height="1.800" rx="0.500"/><rect x="108" y="772.500" width="1.800" height="1.800" rx="0.500"/><rect x="111.200" y="772.500" width="1.800" height="1.800" rx="0.500"/></g>
<rect x="170.600" y="767.500" width="2.900" height="9" rx="1.200"/><rect x="176.100" y="762.800" width="2.900" height="13.700" rx="1.200"/><rect x="181.700" y="769.500" width="2.900" height="7" rx="1.200"/>
</svg>
<!-- STATUS BAR -->
<div class="st" style="left:42px">免费电话</div>
<div class="st" style="left:122px">计算器</div>
<div class="st" style="left:190px">登录统计</div>
<div class="st" style="left:1004px">版本号<span style="font-family:'Liberation Mono','Noto Sans Mono CJK SC',monospace;letter-spacing:-0.8px">5.1.61.15</span></div>

<div id="frame"></div>
<svg class="abs" style="left:0;top:0;width:1116px;height:784px;z-index:60;pointer-events:none" viewBox="0 0 1116 784"><path d="M0 0 H3 L0 3Z M1116 0 V3 L1113 0Z M0 784 V781 L3 784Z M1116 784 H1113 L1116 781Z" fill="#f4f4f4"/></svg>
</body>
</html>
